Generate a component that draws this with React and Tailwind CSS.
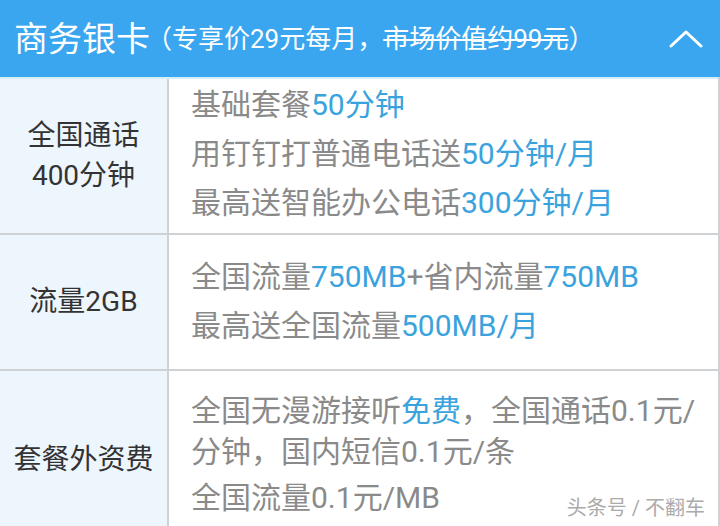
const rows = [
  {
    label: ['全国通话', '400分钟'],
    pad: 'pt-[5px] pb-[10px] gap-[8px]',
    lines: [
      [['基础套餐'], ['50分钟', true]],
      [['用钉钉打普通电话送'], ['50分钟/月', true]],
      [['最高送智能办公电话'], ['300分钟/月', true]],
    ],
  },
  {
    label: ['流量2GB'],
    pad: 'pt-[21px] pb-[23px] gap-[8px]',
    lines: [
      [['全国流量'], ['750MB', true], ['+省内流量'], ['750MB', true]],
      [['最高送全国流量'], ['500MB/月', true]],
    ],
  },
];

function Line({ parts }) {
  return (
    <p className="leading-[41px] whitespace-nowrap">
      {parts.map(([text, hi], i) => (
        <span key={i} className={hi ? 'text-[#3aa3dd]' : ''}>
          {text}
        </span>
      ))}
    </p>
  );
}

function Row({ label, children, pad, first }) {
  return (
    <div className={`flex ${first ? 'border-t-2 border-[#d4eefa]' : 'border-t-2 border-[#cfd2d5]'}`}>
      <div className="w-[169px] shrink-0 bg-[#edf5fd] border-r-2 border-[#cfd2d5] flex flex-col items-center justify-center text-[28px] leading-[40px] text-[#333]">
        {label.map((l) => (
          <span key={l}>{l}</span>
        ))}
      </div>
      <div className={`flex-1 bg-white pl-[22px] ${pad} flex flex-col text-[30px] text-[#8a8a8a]`}>
        {children}
      </div>
    </div>
  );
}

export default function App() {
  return (
    <div className="relative w-[720px] h-[526px] overflow-hidden bg-white font-['Roboto','Noto_Sans_CJK_SC',sans-serif]">
      {/* 标题栏 */}
      <div className="h-[77px] bg-[#39a6ef] flex items-center pl-[14px] pr-[17px] text-white">
        <span className="text-[34px] leading-none">商务银卡</span>
        <span className="text-[26px] leading-none ml-[-4px]">
          （专享价29元每月，<span className="line-through">市场价值约99元</span>）
        </span>
        <svg className="ml-auto" width="34" height="20" viewBox="0 0 34 20" fill="none">
          <polyline points="2,17 17,3 32,17" stroke="white" strokeWidth="3" strokeLinecap="round" strokeLinejoin="round" />
        </svg>
      </div>

      <div className="border-r-2 border-[#cfd2d5]">
        {rows.map((r, i) => (
          <Row key={i} label={r.label} pad={r.pad} first={i === 0}>
            {r.lines.map((parts, j) => (
              <Line key={j} parts={parts} />
            ))}
          </Row>
        ))}

        <Row label={['套餐外资费']} pad="pt-[19px] pb-[30px] gap-[5px]">
          <p className="leading-[41px] whitespace-nowrap">
            全国无漫游接听<span className="text-[#3aa3dd]">免费</span>，全国通话0.1元/
            <br />
            分钟，国内短信0.1元/条
          </p>
          <p className="leading-[41px] whitespace-nowrap">全国流量0.1元/MB</p>
        </Row>
      </div>

      {/* 水印 */}
      <div className="absolute right-[15px] bottom-[6px] text-[20px] leading-[24px] text-[#ababab] [text-shadow:0_0_2px_white]">
        头条号 / 不翻车
      </div>
    </div>
  );
}
